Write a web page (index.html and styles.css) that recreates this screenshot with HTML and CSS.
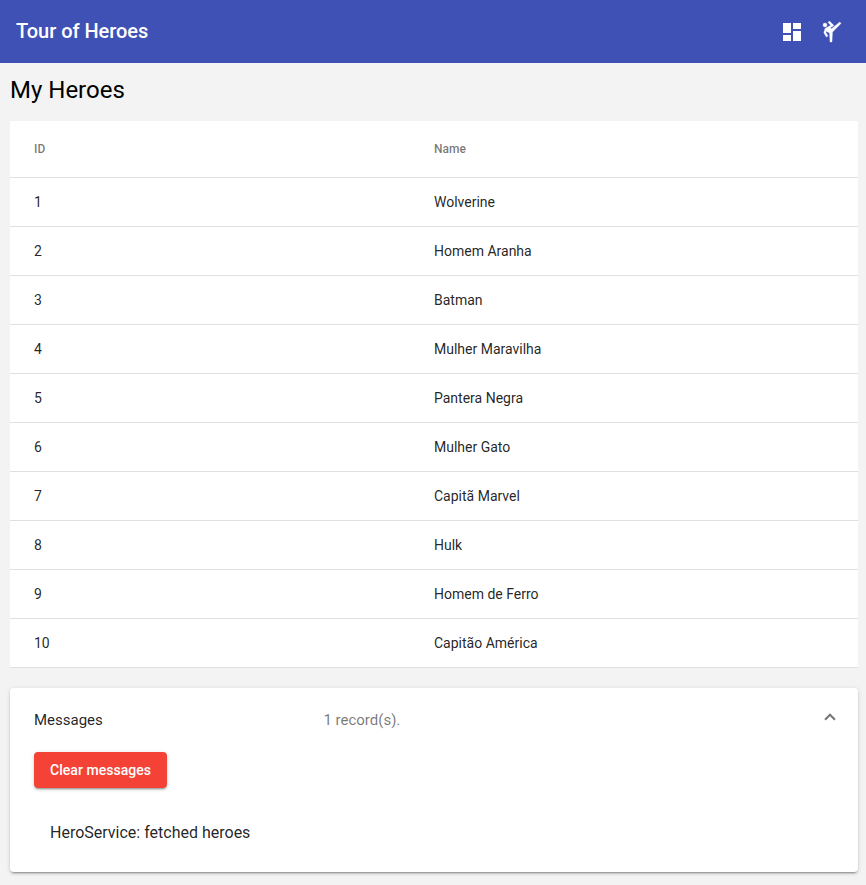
FILE: index.html
```html
<!DOCTYPE html>
<html lang="en">
<head>
<meta charset="utf-8">
<title>Tour of Heroes</title>
<link rel="stylesheet" href="styles.css">
</head>
<body>
<header class="toolbar">
  <span class="brand">Tour of Heroes</span>
  <nav class="actions">
    <svg viewBox="0 0 24 24"><path d="M3 13h8V3H3v10zm0 8h8v-6H3v6zm10 0h8V11h-8v10zm0-18v6h8V3h-8z"/></svg>
    <svg class="martial" viewBox="0 0 24 24"><path d="M19.8 2l-8.2 6.7-1.21-1.04 3.6-2.08L9.41 1 8 2.41l2.74 2.74L5 8.46l-1.19 4.29L6.27 17 8 16l-2.03-3.52.35-1.3L9.5 13l.5 9h2l.5-10L21 3.4z"/><circle cx="5" cy="5" r="2"/></svg>
  </nav>
</header>
<main class="content">
  <h2 class="title">My Heroes</h2>
  <table class="heroes">
    <thead><tr><th>ID</th><th>Name</th></tr></thead>
    <tbody>
      <tr><td>1</td><td>Wolverine</td></tr>
      <tr><td>2</td><td>Homem Aranha</td></tr>
      <tr><td>3</td><td>Batman</td></tr>
      <tr><td>4</td><td>Mulher Maravilha</td></tr>
      <tr><td>5</td><td>Pantera Negra</td></tr>
      <tr><td>6</td><td>Mulher Gato</td></tr>
      <tr><td>7</td><td>Capitã Marvel</td></tr>
      <tr><td>8</td><td>Hulk</td></tr>
      <tr><td>9</td><td>Homem de Ferro</td></tr>
      <tr><td>10</td><td>Capitão América</td></tr>
    </tbody>
  </table>
  <section class="panel">
    <div class="panel-header">
      <span class="panel-title">Messages</span>
      <span class="panel-description">1 record(s).</span>
      <i class="indicator"></i>
    </div>
    <div class="panel-body">
      <button class="clear">Clear messages</button>
      <div class="message">HeroService: fetched heroes</div>
    </div>
  </section>
</main>
</body>
</html>
```

FILE: styles.css
```css
* { box-sizing: border-box; }
body { margin: 0; min-height: 100vh; background: #f3f3f3; font-family: Roboto, "Liberation Sans", sans-serif; color: rgba(0,0,0,.87); }
.toolbar { display: flex; align-items: center; justify-content: space-between; height: 63px; padding: 0 14px 0 16px; background: #3f51b5; color: #fff; font-size: 20px; font-weight: 500; }
.brand { padding-bottom: 2px; letter-spacing: -.04px; }
.actions { display: flex; padding-top: 1px; }
.actions svg { width: 40px; height: 24px; fill: #fff; }
.actions .martial { stroke: #fff; stroke-width: .3px; }
.content { padding: 0 8px 13px 10px; }
.title { margin: 0; height: 58px; padding-top: 11px; font-size: 24px; line-height: 32px; font-weight: 400; color: #000; }
.heroes { width: 100%; border-spacing: 0; table-layout: fixed; background: #fff; font-size: 14px; }
.heroes th, .heroes td { padding: 0; text-align: left; border-bottom: 1px solid #e0e0e0; }
.heroes th { height: 57px; font-size: 12px; font-weight: 500; color: rgba(0,0,0,.54); }
.heroes td { height: 49px; }
.heroes th:first-child, .heroes td:first-child { width: 424px; padding-left: 24px; }
.panel { margin-top: 20px; height: 184px; background: #fff; border-radius: 4px; box-shadow: 0 3px 1px -2px rgba(0,0,0,.2), 0 2px 2px 0 rgba(0,0,0,.14), 0 1px 5px 0 rgba(0,0,0,.12); }
.panel-header { display: flex; align-items: center; height: 64px; padding: 0 24px; font-size: 15px; }
.panel-title { width: 289.4px; }
.panel-description { flex: 1; color: rgba(0,0,0,.54); }
.indicator { width: 8px; height: 8px; margin-bottom: 2px; border: solid rgba(0,0,0,.54); border-width: 2px 0 0 2px; transform: rotate(45deg); }
.panel-body { padding: 0 24px; }
.clear { display: block; width: 133px; height: 36px; padding: 0 16px; border: 0; border-radius: 4px; background: #f44336; color: #fff; font: 500 14px Roboto, sans-serif; letter-spacing: .03px; white-space: nowrap; box-shadow: 0 3px 1px -2px rgba(0,0,0,.2), 0 2px 2px 0 rgba(0,0,0,.14), 0 1px 5px 0 rgba(0,0,0,.12); }
.message { margin-top: 21px; padding: 0 16px; font-size: 16px; line-height: 48px; }
```
